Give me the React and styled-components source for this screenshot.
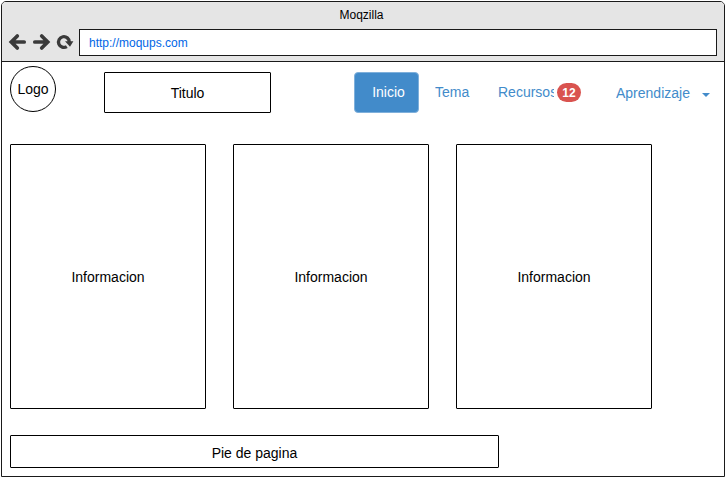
import React from "react";
import styled, { createGlobalStyle } from "styled-components";

const GlobalStyle = createGlobalStyle`
  *, *::before, *::after { box-sizing: border-box; }
  body {
    margin: 0;
    background: #fff;
    font: 14px/16px "Liberation Sans", Arial, sans-serif;
    color: #000;
  }
`;

const BrowserWindow = styled.div`
  width: 724px;
  height: 476px;
  margin: 1px 0 0 1px;
  border: 1px solid #1a1a1a;
  border-radius: 5px 5px 0 0;
  overflow: hidden;
`;

const Chrome = styled.header`
  height: 60px;
  background: #e5e5e5;
  border-bottom: 1px solid #1a1a1a;
`;

const WindowTitle = styled.div`
  height: 27px;
  padding: 5px 3px 0 0;
  text-align: center;
  font-size: 12px;
`;

const Toolbar = styled.div`
  display: flex;
  align-items: center;
  padding-left: 6px;
`;

const ToolIcon = styled.svg`
  width: 18px;
  height: 18px;
  margin: 0 6px 1px 0;
  flex: none;
  overflow: visible;
  fill: none;
  stroke: #3a3a3a;
  stroke-width: 3.7;
`;

const AddressBar = styled.div`
  width: 638px;
  height: 27px;
  margin-left: -1px;
  padding: 0 9px;
  border: 1px solid #1a1a1a;
  background: #fff;
  color: #0066e6;
  font-size: 12px;
  line-height: 26px;
`;

const Page = styled.main`
  padding: 4px 8px 0;
`;

const PageHeader = styled.div`
  display: flex;
  align-items: flex-start;
  height: 78px;
`;

const Logo = styled.div`
  width: 46px;
  height: 46px;
  border: 1px solid #000;
  border-radius: 50%;
  text-align: center;
  line-height: 45px;
`;

const Frame = styled.div`
  display: flex;
  align-items: center;
  justify-content: center;
  width: ${(p) => p.$width}px;
  height: ${(p) => p.$height}px;
  border: 1px solid #000;
  border-radius: 1px;
`;

const TitleFrame = styled(Frame)`
  margin: 6px 0 0 48px;
  padding-top: 1px;
`;

const FooterFrame = styled(Frame)`
  padding-top: 2px;
`;

const Nav = styled.nav`
  display: flex;
  align-items: center;
  height: 41px;
  margin: 6px 0 0 83px;
  color: #428bca;
`;

const ActiveTab = styled.a`
  width: 65px;
  height: 41px;
  padding-left: 4px;
  border: 1px solid #7fb0db;
  border-radius: 4px;
  background: #428bca;
  color: #fff;
  text-align: center;
  line-height: 38px;
`;

const NavLink = styled.a`
  width: ${(p) => p.$width}px;
  margin-left: ${(p) => p.$gap}px;
  margin-bottom: ${(p) => (p.$low ? 0 : 2)}px;
  overflow: hidden;
  white-space: nowrap;
`;

const Badge = styled.span`
  width: 24px;
  height: 19px;
  margin: 0 0 1px 3px;
  border-radius: 10px;
  background: #d9534f;
  color: #fff;
  font-size: 12px;
  font-weight: bold;
  line-height: 20px;
  text-align: center;
`;

const Caret = styled.span`
  margin: 4px 0 0 10px;
  border: 4px solid transparent;
  border-top-color: #428bca;
  border-bottom: 0;
`;

const Cards = styled.section`
  display: flex;
  gap: 27px;
  margin-bottom: 26px;
`;

const cards = ["Informacion", "Informacion", "Informacion"];

export default function App() {
  return (
    <>
      <GlobalStyle />
      <BrowserWindow>
        <Chrome>
          <WindowTitle>Moqzilla</WindowTitle>
          <Toolbar>
            <ToolIcon viewBox="0 0 18 18" strokeLinecap="round">
              <path d="M16.2 9H4M9.3 3L3.3 9l6 6" />
            </ToolIcon>
            <ToolIcon viewBox="0 0 18 18" strokeLinecap="round">
              <path d="M2.8 9H15M9.7 3l6 6-6 6" />
            </ToolIcon>
            <ToolIcon viewBox="0 0 18 18">
              <path d="M10.8 13.6A5.4 5.4 0 1 1 13.3 9" strokeWidth="3.3" />
              <path d="M9 8.2h8.4l-3.4 5.6z" fill="#3a3a3a" stroke="none" />
            </ToolIcon>
            <AddressBar>http://moqups.com</AddressBar>
          </Toolbar>
        </Chrome>
        <Page>
          <PageHeader>
            <Logo>Logo</Logo>
            <TitleFrame $width={167} $height={41}>Titulo</TitleFrame>
            <Nav>
              <ActiveTab>Inicio</ActiveTab>
              <NavLink $width={36} $gap={16}>Tema</NavLink>
              <NavLink $width={56} $gap={27}>Recursos</NavLink>
              <Badge>12</Badge>
              <NavLink $width={76} $gap={35} $low>Aprendizaje</NavLink>
              <Caret />
            </Nav>
          </PageHeader>
          <Cards>
            {cards.map((label, i) => (
              <Frame key={i} $width={196} $height={265}>{label}</Frame>
            ))}
          </Cards>
          <FooterFrame as="footer" $width={489} $height={33}>Pie de pagina</FooterFrame>
        </Page>
      </BrowserWindow>
    </>
  );
}
